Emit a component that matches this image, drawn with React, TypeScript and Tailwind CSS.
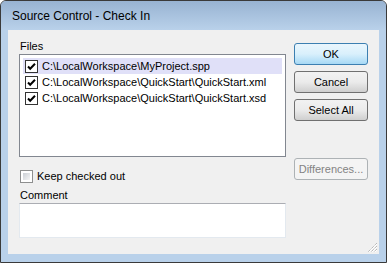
const ui = { fontFamily: '"Liberation Sans", Arial, sans-serif' };

function ListCheck() {
  return (
    <svg width="13" height="13" viewBox="0 0 13 13" className="shrink-0">
      <rect x="0.5" y="0.5" width="12" height="12" fill="#fff" stroke="#333" />
      <path d="M3 6.5 L5.2 8.8 L10 3.8" fill="none" stroke="#000" strokeWidth="2" />
    </svg>
  );
}

function Button({
  label,
  primary,
  disabled,
}: {
  label: string;
  primary?: boolean;
  disabled?: boolean;
}) {
  const tone = disabled
    ? "border-[#adb2b5] bg-[#f4f4f4] text-[#838383]"
    : primary
    ? "border-[#3c7fb1] bg-gradient-to-b from-[#eaf6fd] via-[#d9f0fc] to-[#a7d9f5] text-black"
    : "border-[#707070] bg-gradient-to-b from-[#f2f2f2] via-[#ebebeb] to-[#cfcfcf] text-black";
  return (
    <div
      className={`w-[74px] h-[22px] rounded-[3px] border flex items-center justify-center text-[11px] ${tone}`}
    >
      {label}
    </div>
  );
}

const files = [
  "C:\\LocalWorkspace\\MyProject.spp",
  "C:\\LocalWorkspace\\QuickStart\\QuickStart.xml",
  "C:\\LocalWorkspace\\QuickStart\\QuickStart.xsd",
];

export default function App() {
  return (
    <div className="w-[387px] h-[263px] bg-white">
      <div className="w-[387px] h-[263px] border border-[#3a3a3a] rounded-t-[6px] bg-[#b9d1ea] flex flex-col overflow-hidden">
        <div
          className="h-[29px] shrink-0 bg-gradient-to-b from-[#98b3d2] to-[#b9d1ea] pl-[11px] flex items-center text-[12px] text-black"
          style={ui}
        >
          Source Control - Check In
        </div>
        <div
          className="relative mx-[7px] h-[224px] bg-[#f0f0f0] flex pl-[11px] pt-[8px] text-[11px] text-black"
          style={ui}
        >
          <div className="w-[267px] flex flex-col">
            <div className="h-[16px] leading-[16px] pl-[1px]">Files</div>
            <div className="h-[103px] border border-[#828790] bg-white p-[3px]">
              {files.map((f, i) => (
                <div
                  key={f}
                  className={`h-[16px] flex items-center gap-[4px] pl-[2px] ${
                    i === 0 ? "bg-[#e0e0f8]" : ""
                  }`}
                >
                  <ListCheck />
                  <span>{f}</span>
                </div>
              ))}
            </div>
            <div className="mt-[13px] h-[13px] flex items-center gap-[4px] pl-[1px]">
              <div className="w-[13px] h-[13px] border border-[#8e8f8f] p-[2px] bg-white">
                <div className="w-full h-full bg-gradient-to-br from-[#cbcfd5] to-[#f6f6f6]" />
              </div>
              <span>Keep checked out</span>
            </div>
            <div className="mt-[4px] h-[16px] leading-[16px] pl-[1px]">Comment</div>
            <div className="h-[35px] border border-[#e3e9ef] border-t-[#abadb3] bg-white" />
          </div>
          <div className="ml-[8px] pt-[5px] flex flex-col gap-[6px]">
            <Button label="OK" primary />
            <Button label="Cancel" />
            <Button label="Select All" />
            <div className="mt-[31px]">
              <Button label="Differences..." disabled />
            </div>
          </div>
          <svg
            width="11"
            height="11"
            viewBox="0 0 11 11"
            className="absolute right-[1px] bottom-[1px]"
          >
            <path
              d="M10 1 L1 10 M10 4 L4 10 M10 7 L7 10"
              stroke="#a0a0a0"
              strokeWidth="1"
              strokeDasharray="1 1"
            />
            <path d="M10 2 L2 10 M10 5 L5 10 M10 8 L8 10" stroke="#fff" strokeWidth="1" />
          </svg>
        </div>
      </div>
    </div>
  );
}
